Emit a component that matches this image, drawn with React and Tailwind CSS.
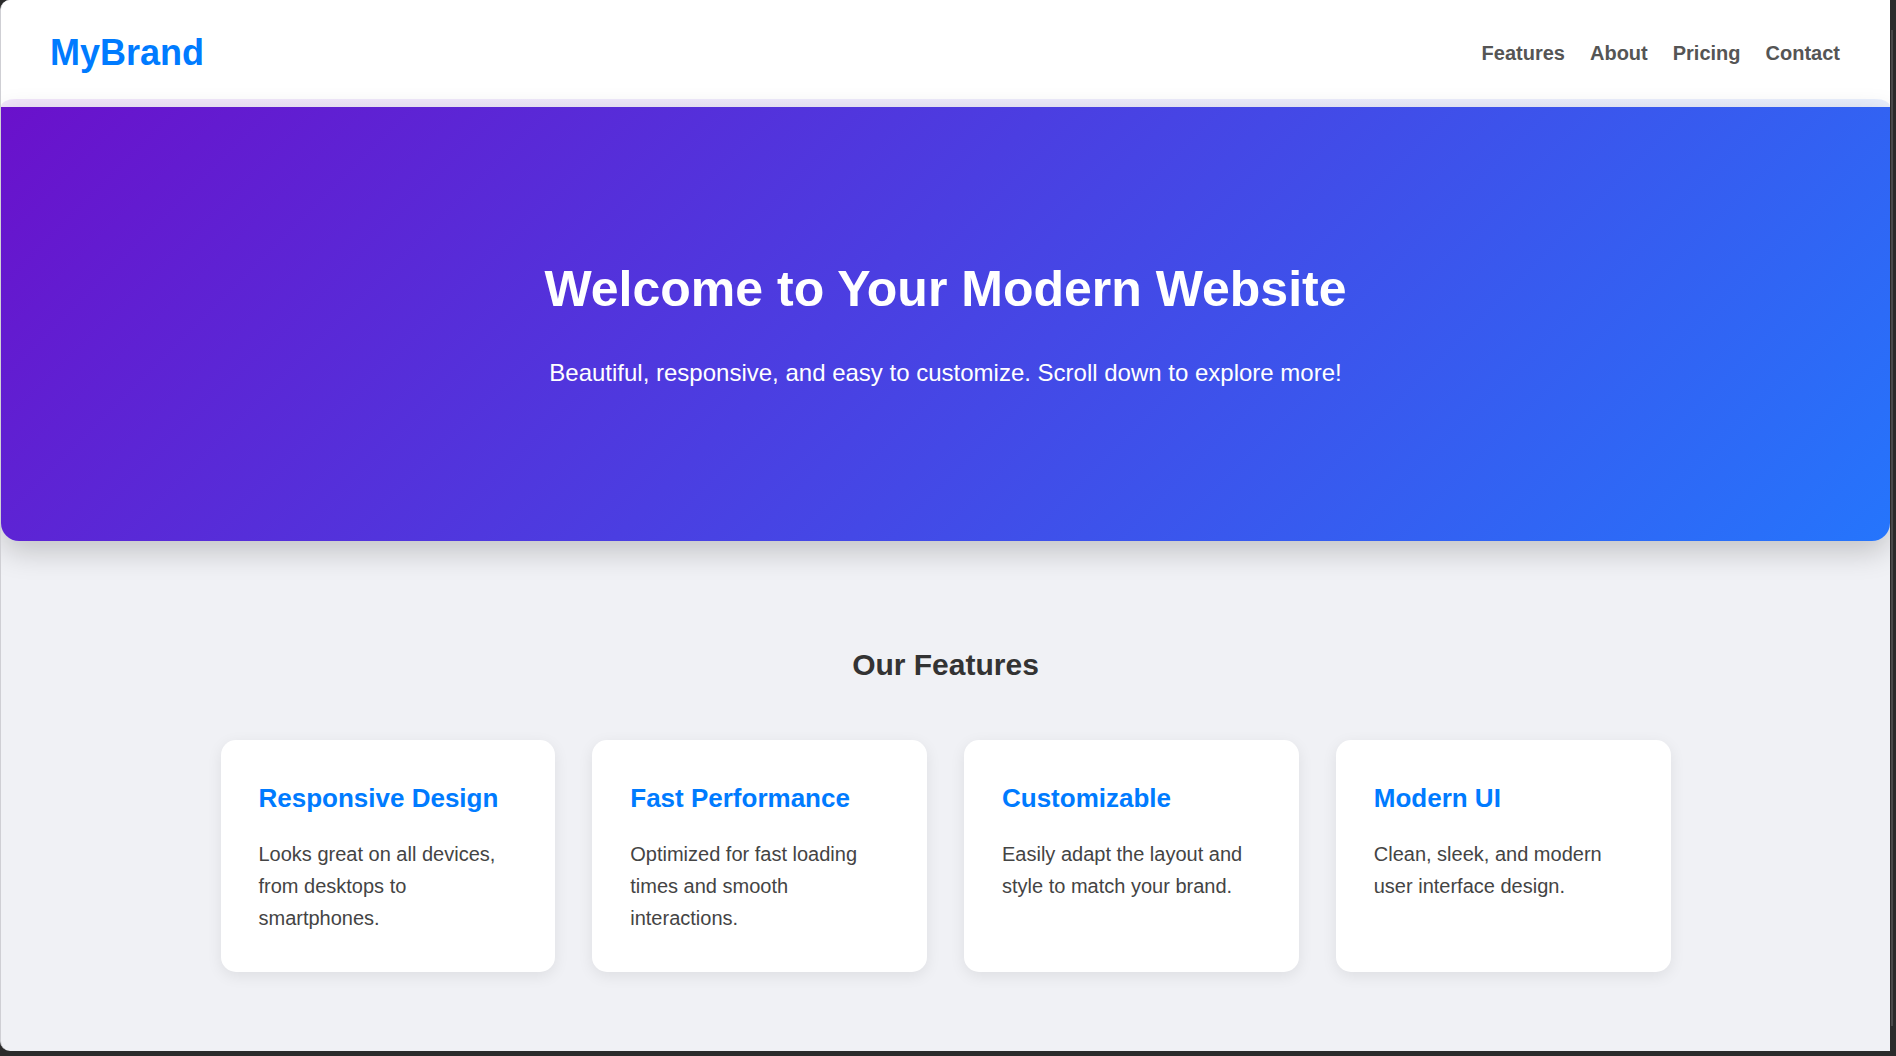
const navLinks = ['Features', 'About', 'Pricing', 'Contact']

const features = [
  { title: 'Responsive Design', text: 'Looks great on all devices, from desktops to smartphones.' },
  { title: 'Fast Performance', text: 'Optimized for fast loading times and smooth interactions.' },
  { title: 'Customizable', text: 'Easily adapt the layout and style to match your brand.' },
  { title: 'Modern UI', text: 'Clean, sleek, and modern user interface design.' },
]

function Header() {
  return (
    <div className="bg-white">
      <header className="h-[99px] flex items-center justify-between pl-[49px] pr-[50px] pt-[6px]">
        <a className="text-[36px] leading-[40px] font-bold text-[#007bff]">MyBrand</a>
        <nav className="flex items-center gap-[25px]">
          {navLinks.map((link) => (
            <a key={link} className="text-[20px] leading-[24px] font-bold text-[#555]">
              {link}
            </a>
          ))}
        </nav>
      </header>
      {/* faint strip above hero */}
      <div className="h-2 rounded-t-[14px_8px] bg-[linear-gradient(90deg,#f2e6fb,#e9effd)]" />
    </div>
  )
}

function Hero() {
  return (
    <section className="h-[434px] pb-[2px] flex flex-col items-center justify-center rounded-b-[18px] bg-[linear-gradient(135deg,#6a11cb_0%,#2575fc_100%)] shadow-[0_10px_30px_rgba(0,0,0,0.2)] text-white">
      <h1 className="text-[50px] leading-[58px] font-bold">Welcome to Your Modern Website</h1>
      <p className="mt-[41px] text-[24px] leading-[28px]">
        Beautiful, responsive, and easy to customize. Scroll down to explore more!
      </p>
    </section>
  )
}

function FeatureCard({ title, text }) {
  return (
    <div className="bg-white rounded-[15px] shadow-[0_4px_15px_rgba(0,0,0,0.08)] pt-[43px] pb-[38px] px-[38px]">
      <h3 className="text-[26px] leading-[30px] font-bold text-[#007bff]">{title}</h3>
      <p className="mt-[25px] text-[20px] leading-[32px] text-[#444]">{text}</p>
    </div>
  )
}

export default function App() {
  return (
    <div className="w-[1896px] h-[1056px] bg-[#2b2b2b] flex overflow-hidden font-['Liberation_Sans',Arial,sans-serif]">
      <div className="w-[1890px] h-[1051px] bg-[#f0f1f5] rounded-l-[10px] overflow-hidden border-l border-[#cfcfd4]">
        <Header />
        <Hero />
        <section className="pt-[107px]">
          <h2 className="text-center text-[30px] leading-[34px] font-bold text-[#333]">Our Features</h2>
          <div className="mt-[58px] mx-auto w-[1450px] grid grid-cols-4 gap-[37px]">
            {features.map((f) => (
              <FeatureCard key={f.title} {...f} />
            ))}
          </div>
        </section>
      </div>
      {/* window scrollbar strip */}
      <div className="flex-1 relative">
        <div className="absolute left-[1px] top-[30px] bottom-[30px] w-[2px] bg-[#4a4a4a]" />
      </div>
    </div>
  )
}
